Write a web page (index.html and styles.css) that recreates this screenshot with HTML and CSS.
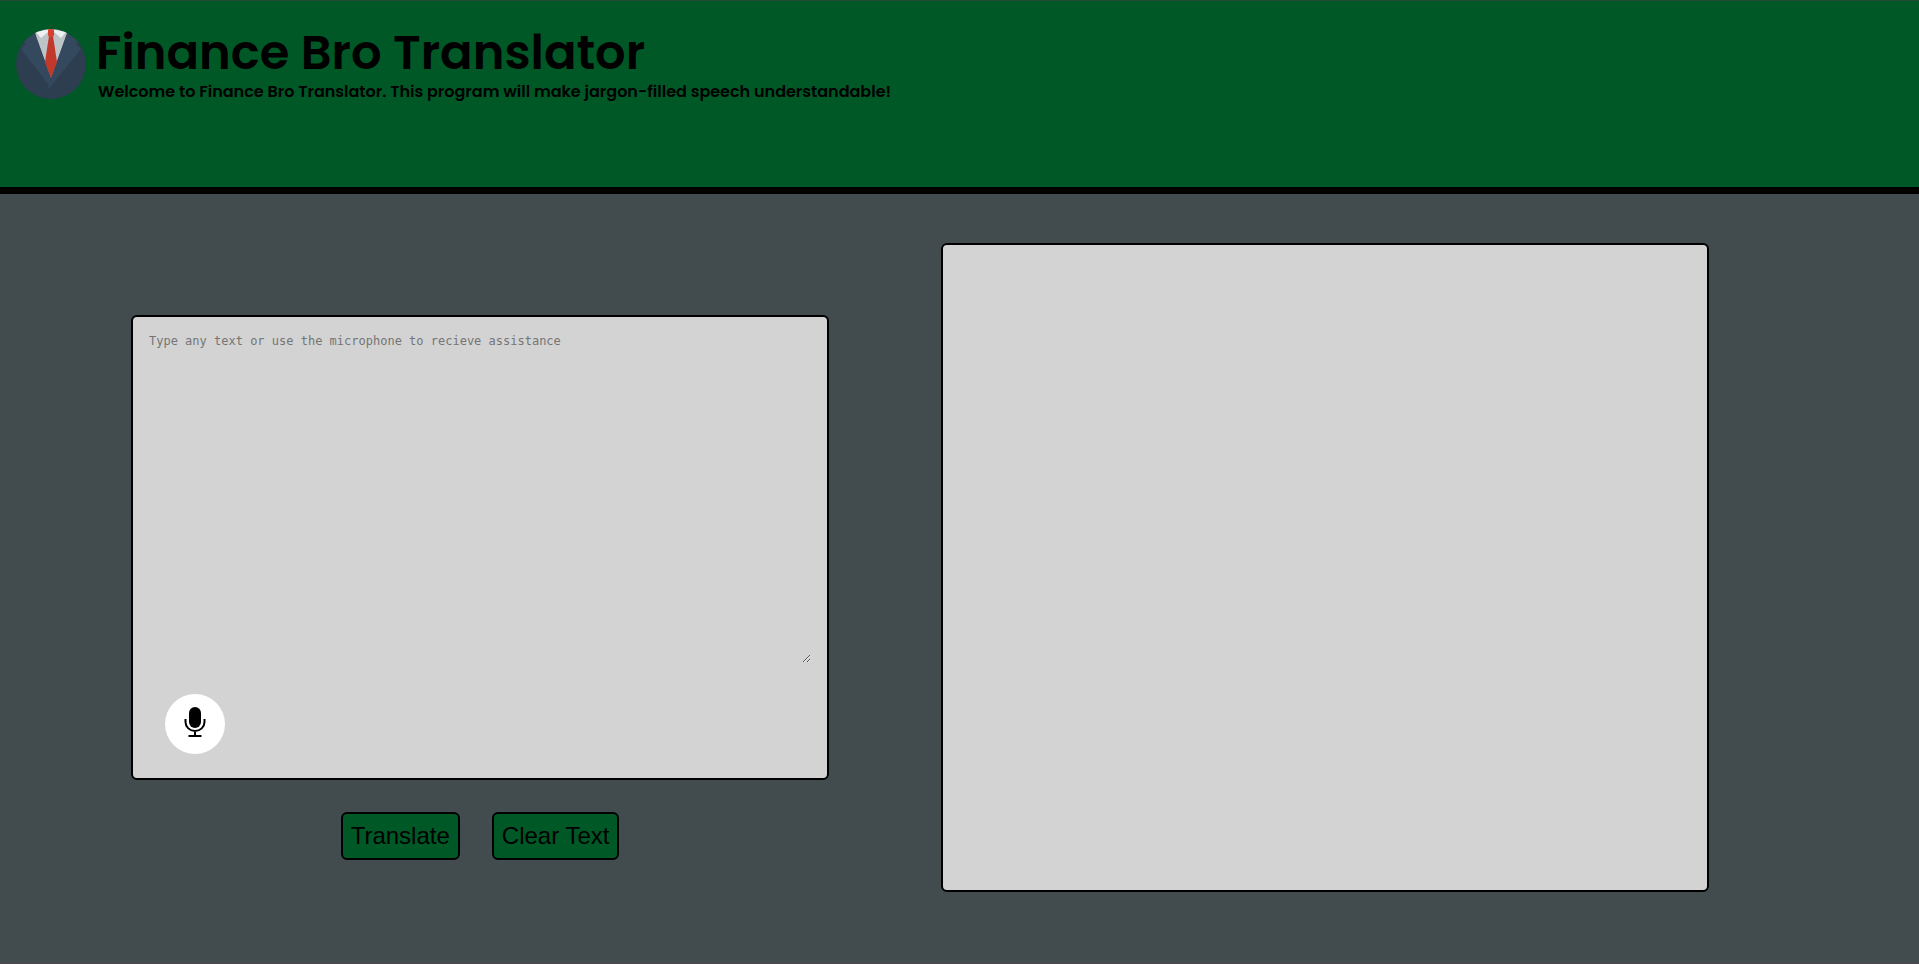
FILE: index.html
```html
<!DOCTYPE html>
<html lang="en">
<head>
    <meta charset="UTF-8">
    <meta name="viewport" content="width=device-width, initial-scale=1.0">
    <title>Finance Bro Translator</title>
    <link rel="stylesheet" href="styles.css">
</head>
<body>
    <header class="header">
        <svg class="logo" viewBox="0 0 70 70" aria-hidden="true">
            <defs>
                <clipPath id="circle"><circle cx="35" cy="35" r="35"/></clipPath>
            </defs>
            <g clip-path="url(#circle)">
                <rect width="70" height="70" fill="#2c3e50"/>
                <path d="M18 0H53L50 8L35 49L20 8Z" fill="#bdc3c7"/>
                <path d="M19 4L35 49L33 56L5 20L10 15L7 12Z" fill="#34495e"/>
                <path d="M51 4L35 49L31 62L65 20L60 15L63 12Z" fill="#34495e"/>
                <path d="M20 3L35 0L32 3L25 9Z" fill="#ecf0f1"/>
                <path d="M50 3L35 0L38 3L45 9Z" fill="#ecf0f1"/>
                <path d="M33 7H37L41 33L35 49L29 33Z" fill="#c0392b"/>
                <path d="M32 0H38L38 6L37 8H33L32 6Z" fill="#d9402f"/>
            </g>
        </svg>
        <div class="header-text">
            <h1>Finance Bro Translator</h1>
            <p>Welcome to Finance Bro Translator. This program will make jargon-filled speech understandable!</p>
        </div>
    </header>

    <main class="main-content">
        <section class="input-area">
            <div class="input-box">
                <textarea id="inputText" class="input-text" aria-label="Text to translate" placeholder="Type any text or use the microphone to recieve assistance"></textarea>
                <button type="button" id="micBtn" class="mic-button" aria-label="Microphone">
                    <svg class="mic-icon" viewBox="0 0 22 30" aria-hidden="true">
                        <rect x="5" y="0" width="12" height="21" rx="6" fill="#000"/>
                        <path d="M1.5 12v3a9.500 9 0 0 0 19 0v-3M11 24v5M4.500 29h13" fill="none" stroke="#000" stroke-width="2"/>
                    </svg>
                </button>
            </div>
            <div class="button-group">
                <button type="button" id="translateBtn" class="button-primary">Translate</button>
                <button type="button" id="clearBtn" class="button-primary">Clear Text</button>
            </div>
        </section>

        <!-- Translated text goes here -->
        <section id="output" class="output-box" aria-live="polite"></section>
    </main>

    <script>
        document.getElementById("clearBtn").addEventListener('click', () => {
            document.getElementById("inputText").value = '';
            document.getElementById("output").textContent = '';
        });
    </script>
</body>
</html>
```

FILE: styles.css
```css
* {
    box-sizing: border-box;
}

body {
    margin: 0;
    min-height: 100vh;
    background-color: #424b4d;
    border-bottom: 1px solid #4c4a4f;
    font-family: Poppins, Inter, sans-serif;
    color: #000;
}

/* Header */
.header {
    display: flex;
    gap: 10px;
    min-height: 194px;
    padding: 28px 16px;
    background-color: #005826;
    border-top: 1px solid #224a36;
    border-bottom: 7px solid #000;
}

.logo {
    flex: none;
    width: 70px;
    height: 70px;
}

.header-text h1 {
    margin: 0;
    font-size: 48px;
    font-weight: 600;
    line-height: 48px;
}

.header-text p {
    margin: 5px 0 0 2px;
    font-size: 16px;
    font-weight: 600;
    line-height: 20px;
}

/* Main Content */
.main-content {
    display: grid;
    grid-template-columns: 10fr 11fr;
    align-items: end;
    gap: 112px;
    padding: 49px 210px 70px 131px;
}

.input-area {
    padding-bottom: 32px;
}

.input-box {
    padding: 16px 16px 24px;
    background-color: #d3d3d3;
    border: 2px solid #000;
    border-radius: 6px;
}

.input-text {
    display: block;
    width: 100%;
    height: 330px;
    padding: 0;
    border: none;
    outline: none;
    background: transparent;
    font-family: Consolas, "DejaVu Sans Mono", monospace;
    font-size: 12px;
    line-height: 16px;
    resize: both;
}

.input-text::placeholder {
    color: #757575;
}

.mic-button {
    display: flex;
    align-items: center;
    justify-content: center;
    width: 60px;
    height: 60px;
    margin: 31px 0 0 16px;
    padding: 0 0 4px;
    border: none;
    border-radius: 50%;
    background-color: #fff;
    cursor: pointer;
}

.mic-icon {
    width: 22px;
    height: 30px;
}

/* Buttons */
.button-group {
    display: flex;
    justify-content: center;
    gap: 32px;
    margin-top: 32px;
}

.button-primary {
    padding: 8px;
    background-color: #005826;
    color: #000;
    border: 2px solid #000;
    border-radius: 6px;
    font-family: Arial, "Liberation Sans", sans-serif;
    font-size: 24px;
    line-height: 28px;
    cursor: pointer;
}

/* Output */
.output-box {
    min-height: 649px;
    padding: 16px;
    background-color: #d3d3d3;
    border: 2px solid #000;
    border-radius: 6px;
}
```
